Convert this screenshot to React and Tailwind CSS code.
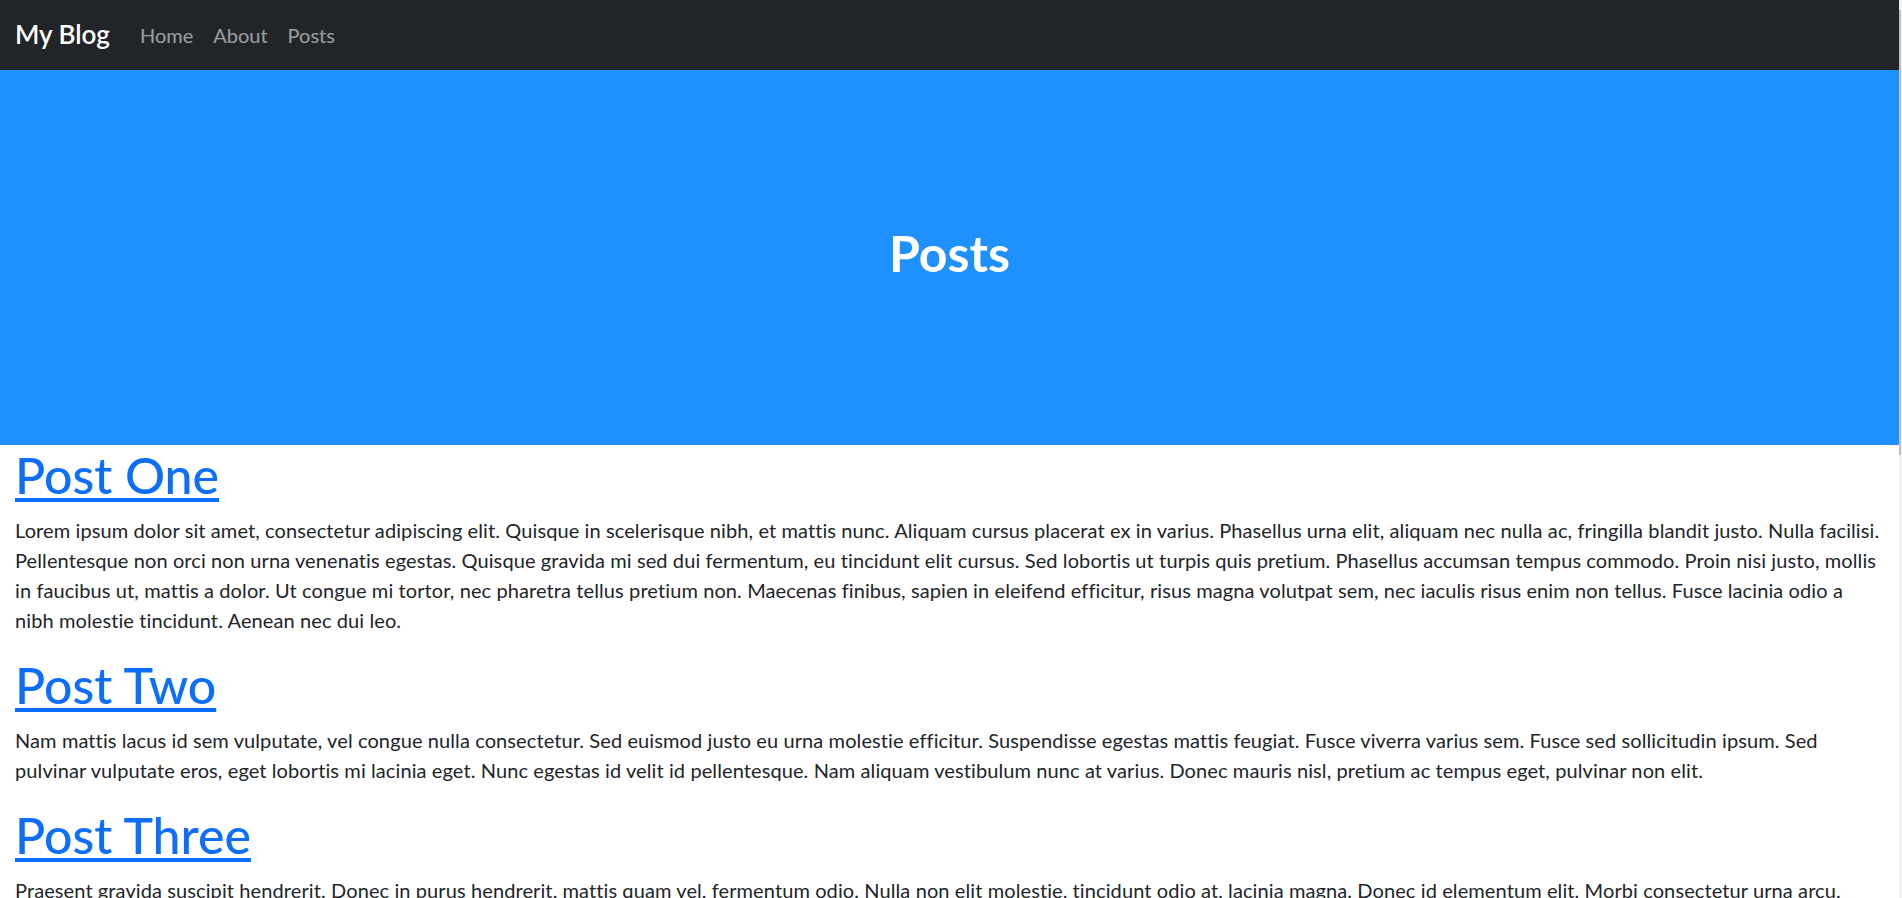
import React from "react";

const posts = [
  {
    title: "Post One",
    body: "Lorem ipsum dolor sit amet, consectetur adipiscing elit. Quisque in scelerisque nibh, et mattis nunc. Aliquam cursus placerat ex in varius. Phasellus urna elit, aliquam nec nulla ac, fringilla blandit justo. Nulla facilisi. Pellentesque non orci non urna venenatis egestas. Quisque gravida mi sed dui fermentum, eu tincidunt elit cursus. Sed lobortis ut turpis quis pretium. Phasellus accumsan tempus commodo. Proin nisi justo, mollis in faucibus ut, mattis a dolor. Ut congue mi tortor, nec pharetra tellus pretium non. Maecenas finibus, sapien in eleifend efficitur, risus magna volutpat sem, nec iaculis risus enim non tellus. Fusce lacinia odio a nibh molestie tincidunt. Aenean nec dui leo.",
  },
  {
    title: "Post Two",
    body: "Nam mattis lacus id sem vulputate, vel congue nulla consectetur. Sed euismod justo eu urna molestie efficitur. Suspendisse egestas mattis feugiat. Fusce viverra varius sem. Fusce sed sollicitudin ipsum. Sed pulvinar vulputate eros, eget lobortis mi lacinia eget. Nunc egestas id velit id pellentesque. Nam aliquam vestibulum nunc at varius. Donec mauris nisl, pretium ac tempus eget, pulvinar non elit.",
  },
  {
    title: "Post Three",
    body: "Praesent gravida suscipit hendrerit. Donec in purus hendrerit, mattis quam vel, fermentum odio. Nulla non elit molestie, tincidunt odio at, lacinia magna. Donec id elementum elit. Morbi consectetur urna arcu, vitae ultricies nisl tempor ac. Curabitur vitae ligula sit amet arcu vulputate iaculis. Integer posuere mattis lectus, quis tincidunt sapien pretium at.",
  },
];

export default function App() {
  return (
    <div className="flex h-[898px] w-full overflow-hidden bg-white font-['Lato',sans-serif] text-[#212529]">
      <div className="flex min-w-0 flex-1 flex-col">
        <nav className="flex h-[70px] shrink-0 items-center bg-[#212529] px-[15px]">
          <a href="#" className="mr-[20px] text-[26px] font-semibold leading-[37.5px] text-white">
            My Blog
          </a>
          <ul className="flex items-center">
            <li>
              <a href="#" className="block px-[10px] text-[20px] leading-[30px] text-white/55">Home</a>
            </li>
            <li>
              <a href="#" className="block px-[10px] text-[20px] leading-[30px] text-white/55">About</a>
            </li>
            <li>
              <a href="#" className="block px-[10px] text-[20px] leading-[30px] text-white/55">Posts</a>
            </li>
          </ul>
        </nav>
        <header className="flex h-[375px] shrink-0 items-center justify-center bg-[#1e90ff]">
          <h1 className="mb-[10px] text-[50px] font-bold leading-[60px] text-white">Posts</h1>
        </header>
        <main className="px-[15px]">
          {posts.map((p) => (
            <article key={p.title}>
              <h2 className="mb-[10px] text-[50px] font-medium leading-[60px]">
                <a href="#" className="text-[#0d6efd] underline decoration-[4px] underline-offset-[4px]">
                  {p.title}
                </a>
              </h2>
              <p className="mb-[20px] text-[20px] leading-[30px] tracking-[0.1px]">{p.body}</p>
            </article>
          ))}
        </main>
      </div>
      <div className="flex w-[3px] shrink-0 flex-col bg-[#f1f1f1] pt-[10px]">
        <div className="h-[445px] w-[2px] bg-[#c1c1c1]"></div>
      </div>
    </div>
  );
}
